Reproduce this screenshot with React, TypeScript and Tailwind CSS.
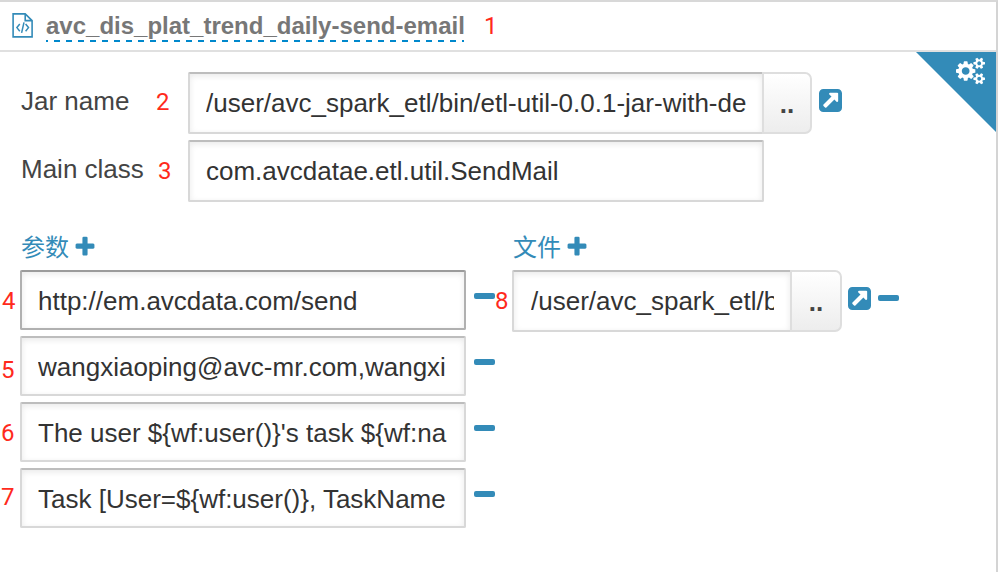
import type { ReactNode } from 'react';
import clsx from 'clsx';

const PARAMS = [
  { n: '4', text: 'http://em.avcdata.com/send', mark: 'left-[2px] top-[17px]' },
  { n: '5', text: 'wangxiaoping@avc-mr.com,wangxi', mark: 'left-[1px] top-[20px]' },
  { n: '6', text: "The user ${wf:user()}'s task ${wf:na", mark: 'left-[1px] top-[17px]' },
  { n: '7', text: 'Task [User=${wf:user()}, TaskName', mark: 'left-[1px] top-[15px]' },
];

function Mark({ children, className }: { children: ReactNode; className?: string }) {
  return (
    <span className={clsx("font-[Roboto,'Liberation_Sans',sans-serif] text-[24px] leading-[28px] text-[#ff2a1c]", className)}>
      {children}
    </span>
  );
}

function Field({ children, className, active }: { children: ReactNode; className?: string; active?: boolean }) {
  return (
    <div
      className={clsx(
        'flex shrink-0 items-center rounded-[2px] border-2 bg-white px-4 text-[26px] leading-[30px] text-[#333] shadow-[inset_0_2px_6px_rgba(0,0,0,0.09)]',
        active ? 'border-[#b0b0b0] border-t-[#9b9b9b]' : 'border-[#d8d8d8] border-t-[#bdbdbd]',
        className,
      )}
    >
      <div className="w-full overflow-hidden whitespace-nowrap">{children}</div>
    </div>
  );
}

function Browse({ className }: { className: string }) {
  return (
    <button
      className={clsx(
        '-ml-[2px] flex h-[62px] shrink-0 items-center justify-center rounded-r-[7px] border-2 border-[#dedede] bg-gradient-to-b from-white to-[#ededed] pt-[2px] text-[26px] font-bold leading-[30px] text-[#444]',
        className,
      )}
    >
      ..
    </button>
  );
}

function Plus() {
  return (
    <svg className="size-[24px]" viewBox="0 0 1792 1792" fill="currentColor">
      <path d="M1600 736v192q0 40-28 68t-68 28h-416v416q0 40-28 68t-68 28h-192q-40 0-68-28t-28-68v-416h-416q-40 0-68-28t-28-68v-192q0-40 28-68t68-28h416v-416q0-40 28-68t68-28h192q40 0 68 28t28 68v416h416q40 0 68 28t28 68z" />
    </svg>
  );
}

function Minus({ className }: { className?: string }) {
  return <span className={clsx('block h-[6px] w-[21px] shrink-0 rounded-[2px] bg-[#338bb8]', className)} />;
}

function ExternalLink({ className }: { className?: string }) {
  return (
    <svg className={clsx('size-[23px] shrink-0 text-[#338bb8]', className)} viewBox="128 128 1536 1536" fill="currentColor">
      <path d="M1408 928v-480q0-26-19-45t-45-19h-480q-42 0-59 39-17 41 14 70l144 144-534 534q-19 19-19 45t19 45l102 102q19 19 45 19t45-19l534-534 144 144q18 19 45 19 12 0 25-5 39-17 39-59zm256-512v960q0 119-84.5 203.5t-203.5 84.5h-960q-119 0-203.5-84.5t-84.5-203.5v-960q0-119 84.5-203.5t203.5-84.5h960q119 0 203.5 84.5t84.5 203.5z" />
    </svg>
  );
}

const SMALL_GEAR =
  'M1920 1338v140q0 16-149 31-12 27-30 52 51 113 51 138 0 4-4 7-122 71-124 71-8 0-46-47t-52-68q-20 2-30 2t-30-2q-14 21-52 68t-46 47q-2 0-124-71-4-3-4-7 0-25 51-138-18-25-30-52-149-15-149-31v-140q0-16 149-31 13-29 30-52-51-113-51-138 0-4 4-7 4-2 35-20t59-34 30-16q8 0 46 46.5t52 67.5q20-2 30-2t30 2q51-71 92-112l6-2q4 0 124 70 4 3 4 7 0 25-51 138 17 23 30 52 149 15 149 31zM1664 1408q0-52-38-90t-90-38-90 38-38 90q0 53 37.5 90.5t90.5 37.5 90.5-37.5 37.5-90.5z';

function Gears({ className }: { className?: string }) {
  return (
    <svg className={className} viewBox="0 0 1920 1792" fill="white" fillRule="evenodd">
      <path d="M896 896q0-106-75-181t-181-75-181 75-75 181 75 181 181 75 181-75 75-181zM1280 805v185q0 10-7 19.5t-16 10.5l-155 24q-11 35-32 76 34 48 90 115 7 11 7 20 0 12-7 19-23 30-82.5 89.5t-78.5 59.5q-11 0-21-7l-115-90q-37 19-77 31-11 108-23 155-7 24-30 24h-186q-11 0-20-7.5t-10-17.5l-23-153q-34-10-75-31l-118 89q-7 7-20 7-11 0-21-8-144-133-144-160 0-9 7-19 10-14 41-53t47-61q-23-44-35-82l-152-24q-10-1-17-9.5t-7-19.5v-185q0-10 7-19.5t16-10.5l155-24q11-35 32-76-34-48-90-115-7-11-7-20 0-12 7-20 22-30 82-89t79-59q11 0 21 7l115 90q34-18 77-32 11-108 23-154 7-24 30-24h186q11 0 20 7.5t10 17.5l23 153q34 10 75 31l118-89q8-7 20-7 11 0 21 8 144 133 144 160 0 8-7 19-12 16-42 54t-45 60q23 48 34 82l152 23q10 2 17 10.5t7 19.5z" />
      <path d={SMALL_GEAR} />
      <path d={SMALL_GEAR} transform="translate(0 -1024)" />
    </svg>
  );
}

function CodeFile() {
  return (
    <svg className="mt-[11px] h-[25px] w-[21px] shrink-0" viewBox="0 0 21 25" fill="none" stroke="#338bb8" strokeWidth="1.6">
      <path d="M1.1.9H13.2L20.1 7.6V23.9H1.1zM13.2.9V7.6H20.1" />
      <path d="M7.8 11L4.9 14.6 7.8 18.2M13.6 11L16.5 14.6 13.6 18.2M12 9.4L9.6 19.9" strokeWidth="1.5" />
    </svg>
  );
}

function SectionTitle({ children }: { children: ReactNode }) {
  return (
    <div className="flex h-[30px] items-center gap-[4px] whitespace-nowrap pl-px text-[24px] leading-[30px] text-[#338bb8]">
      <span className="-mt-[2px] font-['Noto_Sans_CJK_SC',sans-serif]">{children}</span>
      <Plus />
    </div>
  );
}

export default function App() {
  return (
    <div className="relative h-[572px] w-[998px] overflow-hidden border-r-2 border-t-2 border-r-[#d4d4d4] border-t-[#d8d8d8] bg-white font-['Liberation_Sans',Arial,sans-serif]">
      <header className="flex h-[50px] items-start border-b-2 border-[#e0e0e0] pl-[12px]">
        <CodeFile />
        <h1 className="ml-[13px] mt-[8px] h-[32px] w-[418px] whitespace-nowrap bg-[repeating-linear-gradient(90deg,#0088cc_0_2px,transparent_2px_8px,#0088cc_8px_12px)] bg-[length:12px_2px] bg-bottom-left bg-repeat-x text-[24px] font-bold leading-[31px] text-[#777]">
          avc_dis_plat_trend_daily-send-email
        </h1>
        <Mark className="ml-[20px] mt-[10px]">1</Mark>
      </header>

      <div className="absolute right-0 top-[50px] h-[80px] w-[80px] bg-[#338bb8] [clip-path:polygon(0_0,100%_0,100%_100%)]">
        <Gears className="absolute left-[40px] top-[5px] h-[28px] w-[29px]" />
      </div>

      <main className="pt-5">
        <section className="flex flex-col gap-[6px]">
          <div className="flex h-[62px] pl-[21px]">
            <label className="mt-[14px] w-[135px] whitespace-nowrap text-[26px] leading-[30px] text-[#444]">Jar name</label>
            <Mark className="mt-[16px] w-[32px]">2</Mark>
            <Field className="h-[62px] w-[576px]">/user/avc_spark_etl/bin/etl-util-0.0.1-jar-with-de</Field>
            <Browse className="w-[50px]" />
            <ExternalLink className="ml-[7px] mt-[17px]" />
          </div>
          <div className="flex h-[62px] pl-[21px]">
            <label className="mt-[14px] w-[137px] whitespace-nowrap text-[26px] leading-[30px] text-[#444]">Main class</label>
            <Mark className="mt-[17px] w-[30px]">3</Mark>
            <Field className="h-[62px] w-[576px]">com.avcdatae.etl.util.SendMail</Field>
          </div>
        </section>

        <div className="mt-[30px] flex">
          <section className="w-[512px]">
            <div className="pl-[20px]">
              <SectionTitle>参数</SectionTitle>
            </div>
            <ul className="mt-[8px] flex flex-col gap-[6px]">
              {PARAMS.map((p) => (
                <li key={p.n} className="relative flex pl-[20px]">
                  <Mark className={clsx('absolute', p.mark)}>{p.n}</Mark>
                  <Field className="h-[60px] w-[446px] pt-[2px]" active={p.n === '4'}>
                    {p.text}
                  </Field>
                  <Minus className="ml-[8px] mt-[23px]" />
                </li>
              ))}
            </ul>
          </section>
          <section>
            <SectionTitle>文件</SectionTitle>
            <div className="relative mt-[8px] flex">
              <Mark className="absolute -left-[17px] top-[17px]">8</Mark>
              <Field className="h-[62px] w-[280px] pl-[17px]">/user/avc_spark_etl/b</Field>
              <Browse className="w-[52px]" />
              <ExternalLink className="ml-[6px] mt-[17px]" />
              <Minus className="ml-[7px] mt-[25px]" />
            </div>
          </section>
        </div>
      </main>
    </div>
  );
}
